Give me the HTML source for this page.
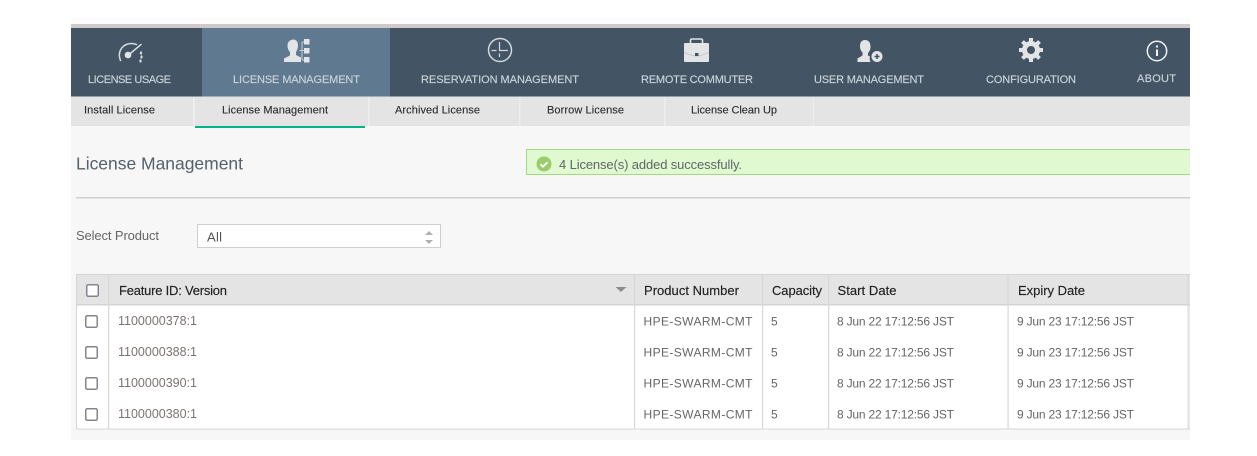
<!DOCTYPE html>
<html><head><meta charset="utf-8"><style>
html,body{margin:0;padding:0;background:#fff;width:1257px;height:456px;overflow:hidden}
svg{display:block}
text{font-family:"Liberation Sans",sans-serif}
.n{font-size:11px;fill:#ccd3d8;stroke:#ccd3d8;stroke-width:.15}
.s{font-size:11px;fill:#2a2a2a;stroke:#2a2a2a;stroke-width:.12}
.h{font-size:13px;fill:#222;stroke:#222;stroke-width:.15}
.r{font-size:12px;fill:#666}
.f{font-size:12.5px;fill:#7b7370}
</style></head><body>
<svg width="1257" height="456" viewBox="0 0 1257 456">
<defs>
<g id="cb"><rect x="0.75" y="0.75" width="11.5" height="11.5" rx="1.5" fill="#fff" stroke="#85838f" stroke-width="1.5"/></g>
</defs>
<rect x="71" y="17" width="1119" height="423" fill="#f7f7f7"/>
<rect x="71" y="17" width="1119" height="7" fill="#fcfcfc"/>
<rect x="71" y="24" width="1119" height="4" fill="#cfc9c9"/>
<rect x="71" y="28" width="1119" height="68.500" fill="#435564"/>
<rect x="202" y="28" width="188" height="68.500" fill="#5f7a90"/>
<rect x="71" y="96.500" width="1119" height="29.500" fill="#e4e4e4"/>
<g fill="#eeeeee"><rect x="193" y="97" width="2" height="29"/><rect x="368" y="97" width="1.500" height="29"/><rect x="519" y="97" width="1.500" height="29"/><rect x="664" y="97" width="1.500" height="29"/><rect x="813" y="97" width="1" height="29"/></g>
<rect x="195" y="126" width="170" height="2" fill="#00b388"/>

<!-- gauge -->
<g fill="none" stroke="#d5dade" stroke-linecap="round">
<path d="M120.500 60.500C117 52 122 44 131 43.500C133.500 43.400 135 44 136.500 44.500" stroke-width="1.500"/>
<path d="M128 55.500L141 44.500" stroke-width="1.500"/>
<path d="M141 52.500v1M141.500 56.500v1M140.500 60.500v1" stroke-width="2.200"/>
</g>
<circle cx="128" cy="55" r="3.300" fill="#e0e4e7"/>
<!-- tree person -->
<g fill="#e2e4e6">
<path d="M293.500 39.500c3 0 4.500 2.500 4.500 6 0 3-1 5-2 6.500v3l5 2.500V62H284v-3.500l6-3v-3.500c-1.500-1.500-2.500-3.500-2.500-6.500 0-3.500 2.500-6 6-6z"/>
<rect x="304" y="39" width="5.500" height="5.500"/><rect x="304" y="48" width="5.500" height="5.500"/><rect x="304" y="57" width="5.500" height="5.500"/>
</g>
<path d="M302 42v18M299.500 50.500h4.500M302 42h2M302 60h2" stroke="#c6ced5" fill="none"/>
<!-- clock -->
<g fill="none" stroke="#d3d8dc">
<circle cx="500" cy="50" r="11.500" stroke-width="1.500"/>
<path d="M499.500 42v8.500h8.500M491.500 50.500h5M499.500 53.500v3.500" stroke-width="1.200"/>
</g>
<!-- briefcase -->
<path d="M690.500 43v-2.500q0-1.500 1.500-1.500h9q1.500 0 1.500 1.500V43" fill="none" stroke="#e2e4e6" stroke-width="1.600"/>
<rect x="684" y="43" width="25" height="19" rx="1" fill="#e2e4e6"/>
<path d="M684 52.500q9 3.500 11 3.500h3.500q1.500 0 10.500-3.500" fill="none" stroke="#b9c2c9" stroke-width=".8"/>
<rect x="695" y="53" width="3.500" height="3" fill="#3f5262"/>
<!-- user add -->
<path d="M865 40c3.500 0 5.500 2.500 5.500 6.500 0 3-1 5-2.500 6.500v2.500l2 1c-.5 1.500-.5 3.500.5 5.500H857.500v-3.500l5-3v-3c-1.500-1.500-2.500-3.500-2.500-6.500 0-3.500 1.500-6 5-6z" fill="#e2e4e6"/>
<circle cx="877" cy="56.500" r="5.500" fill="#e2e4e6"/>
<path d="M874.500 56.500h5M877 54v5" stroke="#3f5262" stroke-width="1.500"/>
<!-- gear -->
<g fill="none" stroke="#e2e4e6">
<circle cx="1031" cy="50" r="6.500" stroke-width="5"/>
<g stroke-width="4"><path d="M1031 38v4M1031 58v4M1019 50h4M1039 50h4M1022.500 41.500l2.800 2.800M1036.700 55.700l2.800 2.800M1022.500 58.500l2.800-2.800M1036.700 44.300l2.800-2.800"/></g>
</g>
<!-- info -->
<circle cx="1157" cy="51" r="9.700" fill="none" stroke="#f0f2f3" stroke-width="1.500"/>
<rect x="1156" y="49.500" width="2" height="6.500" fill="#f0f2f3"/><rect x="1156" y="45.500" width="2" height="2" fill="#f0f2f3"/>

<text class="n" x="88" y="83" textLength="83">LICENSE USAGE</text>
<text class="n" x="233" y="83" textLength="127">LICENSE MANAGEMENT</text>
<text class="n" x="421" y="83" textLength="158">RESERVATION MANAGEMENT</text>
<text class="n" x="641" y="83" textLength="112">REMOTE COMMUTER</text>
<text class="n" x="814" y="83" textLength="110">USER MANAGEMENT</text>
<text class="n" x="986" y="83" textLength="90">CONFIGURATION</text>
<text class="n" x="1137" y="82" textLength="39">ABOUT</text>

<text class="s" x="84" y="113.500" textLength="71">Install License</text>
<text class="s" x="222" y="113.500" textLength="106">License Management</text>
<text class="s" x="395" y="113.500" textLength="85">Archived License</text>
<text class="s" x="547" y="113.500" textLength="77">Borrow License</text>
<text class="s" x="691" y="113.500" textLength="86">License Clean Up</text>

<text x="76" y="169.500" font-size="17.500" fill="#56616a" textLength="167">License Management</text>
<rect x="526.500" y="149.500" width="670" height="25" fill="#e1f9d0" stroke="#a5d785"/>
<rect x="1190" y="140" width="67" height="50" fill="#fff"/>
<circle cx="544" cy="164" r="7.500" fill="#9ccb6c"/>
<path d="M540.500 164.200l2.500 2.500 4.500-4.500" fill="none" stroke="#fff" stroke-width="1.800"/>
<text x="559" y="169" font-size="13px" fill="#5f6669" textLength="183">4 License(s) added successfully.</text>
<rect x="76" y="197" width="1114" height="1.500" fill="#cfcfcf"/>

<text x="76" y="240" font-size="13" fill="#666" textLength="83">Select Product</text>
<rect x="197.500" y="224.500" width="243" height="23" fill="#fff" stroke="#cfcfcf"/>
<text x="207" y="241.500" font-size="13" fill="#555" textLength="15">All</text>
<path d="M425 235h8l-4-4zM425 240h8l-4 4z" fill="#b0b0b0"/>

<!-- table -->
<rect x="76.500" y="274.500" width="1113.500" height="154.500" fill="#fff" stroke="#d5d5d5"/>
<rect x="77" y="275" width="1113" height="30" fill="#e4e4e4"/>
<rect x="76" y="304" width="1114" height="1.500" fill="#d3d3d3"/>
<rect x="76" y="274" width="1114" height="1" fill="#d5d5d5"/>
<g fill="#d8d8d8">
<rect x="108" y="274" width="1.200" height="155"/><rect x="634" y="274" width="1.200" height="155"/><rect x="762" y="274" width="1.200" height="155"/><rect x="828" y="274" width="1.200" height="155"/><rect x="1007.500" y="274" width="1.200" height="155"/><rect x="1187.500" y="274" width="1.200" height="155"/>
</g>
<use href="#cb" x="86" y="284"/>
<text class="h" x="119" y="295" textLength="108">Feature ID: Version</text>
<path d="M615.500 287h11l-5.500 5z" fill="#8c8c8c"/>
<text class="h" x="644" y="295" textLength="95">Product Number</text>
<text class="h" x="772" y="295" textLength="50">Capacity</text>
<text class="h" x="837.500" y="295" textLength="59">Start Date</text>
<text class="h" x="1018" y="295" textLength="67">Expiry Date</text>

<use href="#cb" x="85" y="315"/>
<text class="f" x="118" y="325" textLength="79">1100000378:1</text>
<text class="r" x="643.500" y="325.500" textLength="109">HPE-SWARM-CMT</text>
<text class="r" x="771" y="325.500">5</text>
<text class="r" x="837" y="325.500" textLength="117">8 Jun 22 17:12:56 JST</text>
<text class="r" x="1017" y="325.500" textLength="117">9 Jun 23 17:12:56 JST</text>

<use href="#cb" x="85" y="346"/>
<text class="f" x="118" y="356" textLength="79">1100000388:1</text>
<text class="r" x="643.500" y="356.500" textLength="109">HPE-SWARM-CMT</text>
<text class="r" x="771" y="356.500">5</text>
<text class="r" x="837" y="356.500" textLength="117">8 Jun 22 17:12:56 JST</text>
<text class="r" x="1017" y="356.500" textLength="117">9 Jun 23 17:12:56 JST</text>

<use href="#cb" x="85" y="377"/>
<text class="f" x="118" y="387" textLength="79">1100000390:1</text>
<text class="r" x="643.500" y="387.500" textLength="109">HPE-SWARM-CMT</text>
<text class="r" x="771" y="387.500">5</text>
<text class="r" x="837" y="387.500" textLength="117">8 Jun 22 17:12:56 JST</text>
<text class="r" x="1017" y="387.500" textLength="117">9 Jun 23 17:12:56 JST</text>

<use href="#cb" x="85" y="408"/>
<text class="f" x="118" y="418" textLength="79">1100000380:1</text>
<text class="r" x="643.500" y="418.500" textLength="109">HPE-SWARM-CMT</text>
<text class="r" x="771" y="418.500">5</text>
<text class="r" x="837" y="418.500" textLength="117">8 Jun 22 17:12:56 JST</text>
<text class="r" x="1017" y="418.500" textLength="117">9 Jun 23 17:12:56 JST</text>
<rect x="1190" y="260" width="67" height="196" fill="#fff"/>
</svg>
</body></html>
